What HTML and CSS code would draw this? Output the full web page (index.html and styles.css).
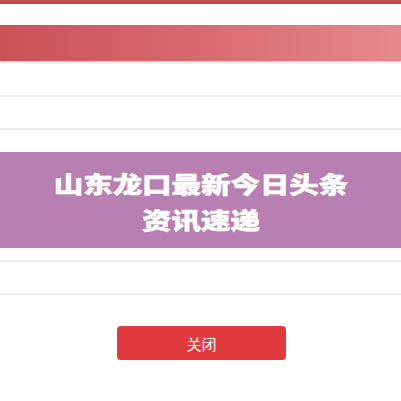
FILE: index.html
```html
<!DOCTYPE html>
<html lang="zh-CN">
<head>
<meta charset="utf-8">
<link rel="stylesheet" href="styles.css">
</head>
<body>
<div class="page">
  <div class="topbar"></div>
  <div class="banner"></div>
  <ul class="list">
    <li class="row"></li>
    <li class="row"></li>
    <li class="row"></li>
    <li class="row"></li>
    <li class="row"></li>
    <li class="row"></li>
    <li class="row"></li>
  </ul>
  <div class="actions">
    <button class="close-btn">关闭</button>
  </div>
  <div class="overlay">
    <h1 class="title"><span>山东龙口最新今日头条</span><span>资讯速递</span></h1>
  </div>
</div>
</body>
</html>
```
FILE: styles.css
```css
html, body {
  margin: 0;
  padding: 0;
  background: #ffffff;
}
.page {
  position: relative;
  width: 401px;
  height: 401px;
  overflow: hidden;
  font-family: "Noto Sans CJK SC", "Noto Sans", sans-serif;
}
.topbar {
  height: 4px;
  background: #c24a4f;
}
.banner {
  margin-top: 21px;
  height: 36px;
  background: linear-gradient(to right, #cb5257, #d86a70 50%, #e5888e);
  box-shadow: 0 2px 2px rgba(230, 150, 155, 0.35);
}
.list {
  list-style: none;
  margin: 3px 0 0;
  padding: 0;
}
.row {
  height: 31px;
  border-bottom: 2px solid #ececec;
}
.actions {
  display: flex;
  justify-content: center;
  margin-top: 31px;
  padding-left: 2px;
}
.close-btn {
  width: 169px;
  height: 34px;
  border: none;
  border-radius: 4px;
  background: #e0393e;
  color: #ffffff;
  font-family: "Noto Sans CJK SC", sans-serif;
  font-size: 15px;
  font-weight: 400;
  padding: 0;
}
.overlay {
  position: absolute;
  left: 0;
  right: 0;
  top: 152px;
  height: 96px;
  background: rgba(180, 120, 174, 0.95);
  display: flex;
  align-items: center;
  justify-content: center;
}
.title {
  margin: 0;
  display: flex;
  flex-direction: column;
  align-items: center;
  color: #ffffff;
  font-size: 23px;
  font-weight: 900;
  line-height: 36px;
  -webkit-text-stroke: 0.5px #ffffff;
  transform: scaleX(1.28);
  padding-top: 2px;
}
```
